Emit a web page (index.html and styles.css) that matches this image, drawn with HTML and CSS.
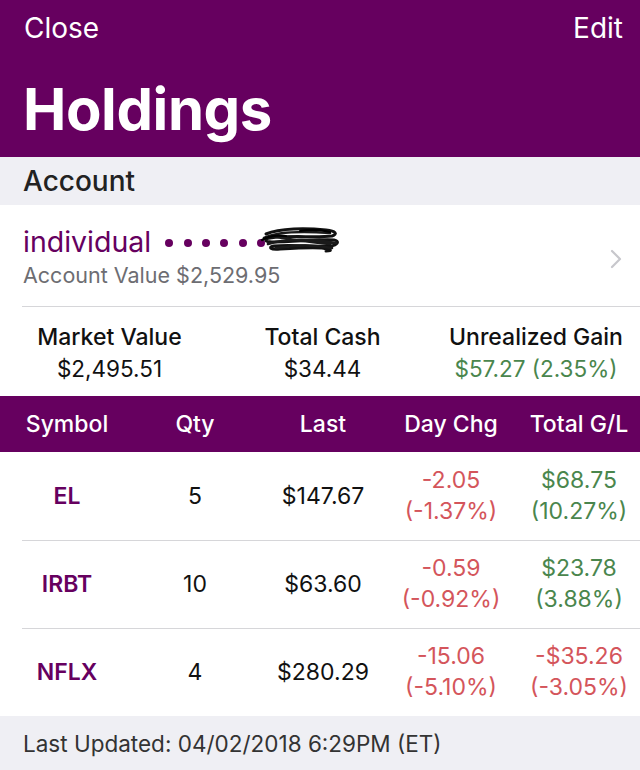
FILE: index.html
```html
<!DOCTYPE html>
<html>
<head>
<meta charset="utf-8">
<link rel="stylesheet" href="styles.css">
</head>
<body>
<div class="screen">
  <header class="nav">
    <div class="nav-bar">
      <span class="nav-btn">Close</span>
      <span class="nav-btn">Edit</span>
    </div>
    <h1 class="title">Holdings</h1>
  </header>

  <div class="section-head">Account</div>

  <div class="account">
    <div class="account-inner">
      <div class="account-text">
        <div class="account-name">
          <span>individual</span>
          <span class="dots"><i></i><i></i><i></i><i></i><i></i><i></i></span>
          <svg class="scribble" width="80" height="28" viewBox="0 0 80 28">
            <path d="M6 8 C20 2, 46 2, 66 4 C76 5, 78 8, 72 10 C56 12, 30 9, 10 12 C4 13, 4 16, 12 16 C34 16, 58 13, 74 14 C80 15, 78 19, 70 20 C52 21, 30 18, 14 20 C8 21, 10 24, 20 23 C36 22, 52 21, 62 22 C70 23, 74 25, 66 25" fill="none" stroke="#111" stroke-width="3" stroke-linecap="round" stroke-linejoin="round"/>
            <path d="M4 12 C16 6, 42 5, 70 7 M8 18 C24 13, 50 12, 76 17 M12 10 C30 14, 52 16, 70 18 M16 22 C34 19, 52 18, 72 22" fill="none" stroke="#1a1a1a" stroke-width="2.6" stroke-linecap="round"/>
            <path d="M2 14 C8 10, 18 9, 26 10 M40 5 C52 3, 62 4, 70 6" fill="none" stroke="#000" stroke-width="2.2" stroke-linecap="round"/>
          </svg>
        </div>
        <div class="account-value">Account Value $2,529.95</div>
      </div>
      <svg class="chevron" width="12" height="20" viewBox="0 0 12 20">
        <path d="M2 2 L10 10 L2 18" fill="none" stroke="#c7c7cc" stroke-width="2.2" stroke-linecap="round" stroke-linejoin="round"/>
      </svg>
    </div>
  </div>

  <div class="summary">
    <div class="sum-col">
      <div class="sum-label">Market Value</div>
      <div class="sum-value">$2,495.51</div>
    </div>
    <div class="sum-col">
      <div class="sum-label">Total Cash</div>
      <div class="sum-value">$34.44</div>
    </div>
    <div class="sum-col">
      <div class="sum-label">Unrealized Gain</div>
      <div class="sum-value gain">$57.27 (2.35%)</div>
    </div>
  </div>

  <div class="thead">
    <div>Symbol</div>
    <div>Qty</div>
    <div>Last</div>
    <div>Day Chg</div>
    <div>Total G/L</div>
  </div>

  <div class="rows">
    <div class="row">
      <div class="sym">EL</div>
      <div>5</div>
      <div>$147.67</div>
      <div class="loss">-2.05<br>(-1.37%)</div>
      <div class="gain">$68.75<br>(10.27%)</div>
    </div>
    <div class="row">
      <div class="sym">IRBT</div>
      <div>10</div>
      <div>$63.60</div>
      <div class="loss">-0.59<br>(-0.92%)</div>
      <div class="gain">$23.78<br>(3.88%)</div>
    </div>
    <div class="row">
      <div class="sym">NFLX</div>
      <div>4</div>
      <div>$280.29</div>
      <div class="loss">-15.06<br>(-5.10%)</div>
      <div class="loss">-$35.26<br>(-3.05%)</div>
    </div>
  </div>

  <footer class="footer">Last Updated: 04/02/2018 6:29PM (ET)</footer>
</div>
</body>
</html>
```

FILE: styles.css
```css
* { box-sizing: border-box; }
html, body { margin: 0; padding: 0; background: #ffffff; }
body { font-family: Inter, "Liberation Sans", sans-serif; color: #111; }

.screen { width: 640px; height: 770px; overflow: hidden; display: flex; flex-direction: column; }

.nav { background: #66005f; color: #fff; height: 157px; flex: none; }
.nav-bar { display: flex; justify-content: space-between; align-items: center; height: 56px; padding: 0 17px 0 24px; }
.nav-btn { font-size: 28px; font-weight: 400; }
.title { margin: 0; padding: 20px 0 0 23px; font-size: 58px; font-weight: 700; line-height: 66px; letter-spacing: -0.4px; }

.section-head { height: 48px; flex: none; background: #efeff4; display: flex; align-items: center; padding-left: 23px; font-size: 28px; font-weight: 500; color: #222; }

.account { height: 102px; flex: none; padding-left: 22px; }
.account-inner { height: 100%; border-bottom: 1px solid #d6d6d9; display: flex; align-items: center; justify-content: space-between; padding-right: 18px; }
.account-text { display: flex; flex-direction: column; gap: 2px; padding-left: 1px; padding-top: 0; }
.account-name { display: flex; align-items: center; color: #66005f; font-size: 28.5px; height: 36px; }
.dots { display: inline-flex; gap: 10.4px; margin-left: 14px; margin-top: 2px; }
.dots i { display: block; width: 8px; height: 8px; border-radius: 50%; background: #66005f; }
.scribble { margin-left: -5px; margin-top: -4px; }
.account-value { font-size: 21.5px; color: #6d6d72; }
.chevron { margin-top: 6px; }

.summary { height: 89px; flex: none; display: grid; grid-template-columns: 213px 213px 214px; padding-left: 3px; align-content: center; padding-top: 2px; }
.sum-col { display: flex; flex-direction: column; align-items: center; line-height: 31px; }
.sum-label { font-size: 23px; font-weight: 500; color: #111; white-space: nowrap; }
.sum-value { font-size: 22.5px; color: #111; white-space: nowrap; }

.gain { color: #4a864d; }
.loss { color: #d4555b; }

.thead { height: 56px; flex: none; background: #66005f; color: #fff; display: grid; grid-template-columns: repeat(5, 128px); padding-left: 3px; align-items: center; font-size: 23px; font-weight: 500; }
.thead div { text-align: center; white-space: nowrap; }

.rows { flex: none; }
.row { height: 88px; display: grid; grid-template-columns: repeat(5, 128px); padding-left: 3px; align-items: center; font-size: 23px; line-height: 31px; position: relative; }
.row div { text-align: center; white-space: nowrap; }
.row + .row::before { content: ""; position: absolute; left: 22px; right: 0; top: 0; height: 1px; background: #d6d6d9; }
.sym { color: #66005f; font-weight: 600; }

.footer { flex: 1; background: #efeff4; display: flex; align-items: center; padding-left: 23px; font-size: 22.5px; color: #333; }
```
